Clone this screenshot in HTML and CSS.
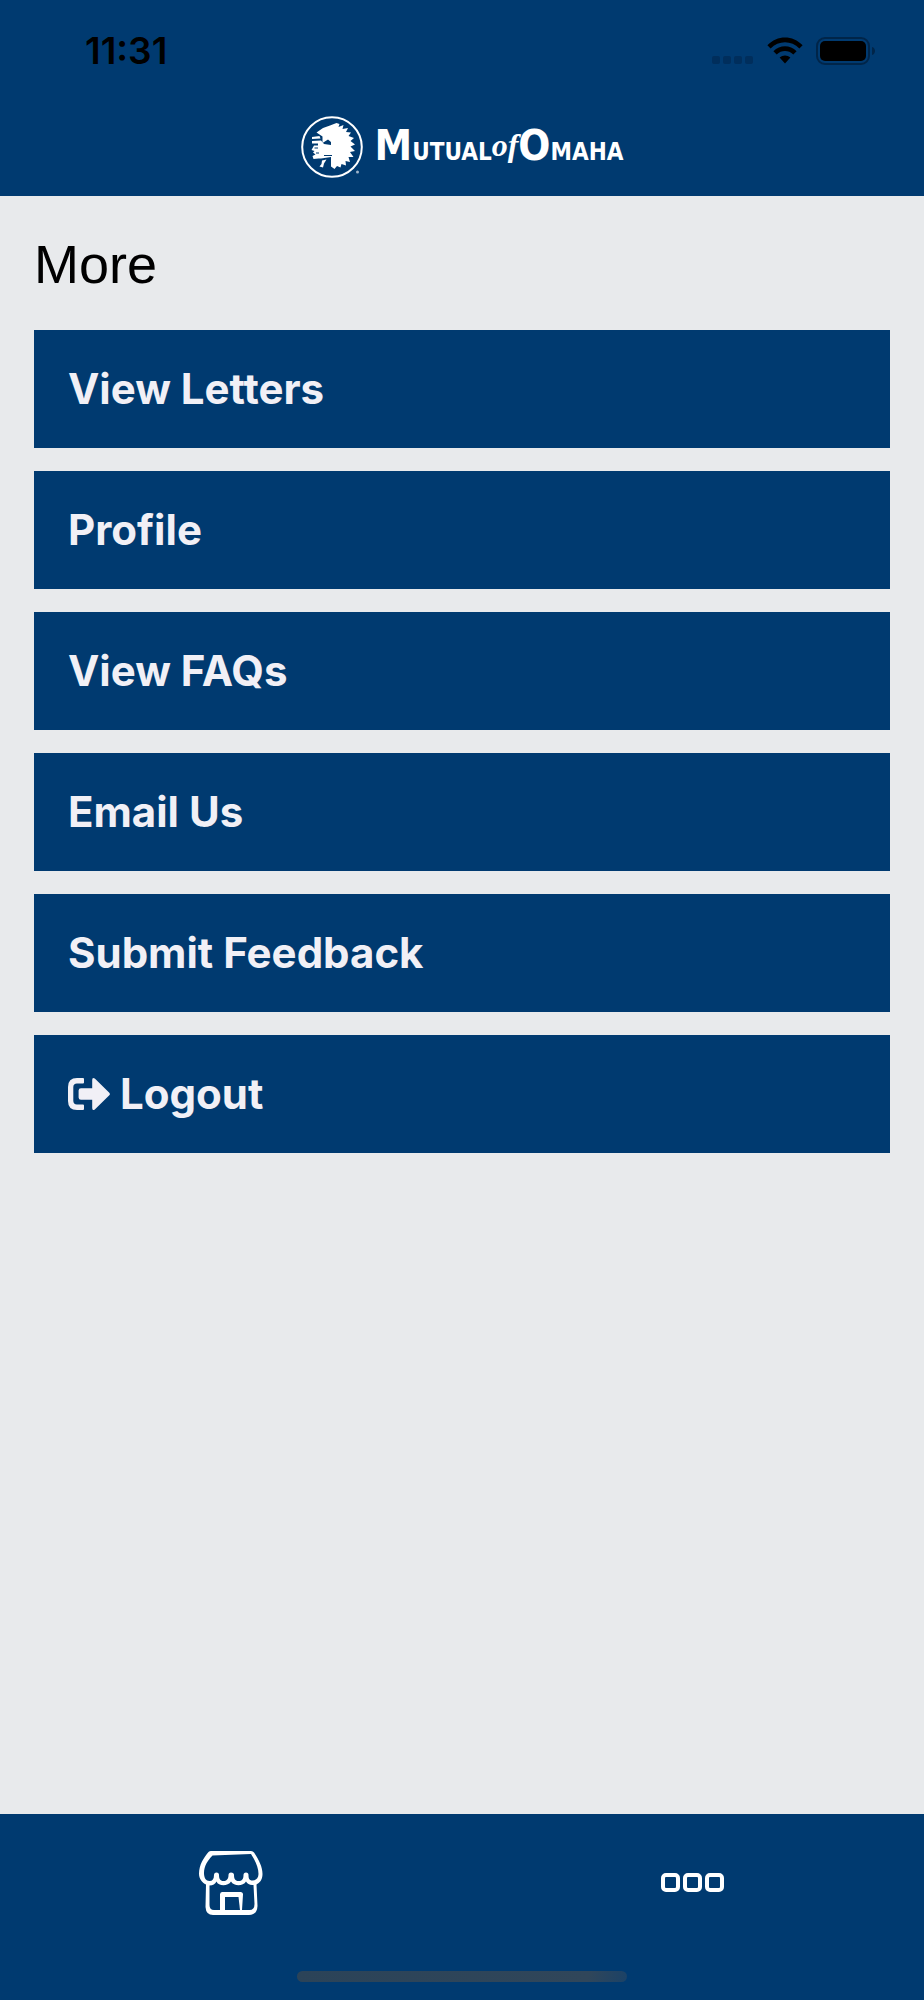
FILE: index.html
```html
<!DOCTYPE html>
<html lang="en">
<head>
<meta charset="utf-8">
<meta name="viewport" content="width=device-width, initial-scale=1">
<title>More</title>
<link rel="stylesheet" href="styles.css">
</head>
<body>
<div class="app">
  <header class="header">
    <div class="status">
      <time class="clock">11:31</time>
      <div class="indicators">
        <svg class="signal" width="42" height="8" viewBox="0 0 42 8" aria-hidden="true">
          <rect x="0" width="8" height="8" rx="2"/><rect x="11" width="8" height="8" rx="2"/><rect x="22" width="8" height="8" rx="2"/><rect x="33" width="8" height="8" rx="2"/>
        </svg>
        <svg class="wifi" width="36" height="28" viewBox="0 0 36 28" aria-hidden="true">
          <path d="M.4 8.2C10.2-2.2 25.800-2.200 35.600 8.200L32.400 11.500C24.500 3.300 11.500 3.300 3.600 11.500Z"/>
          <path d="M6.400 14.300C13 7.600 23 7.600 29.600 14.300L26.300 17.500C21.500 12.900 14.500 12.900 9.700 17.500Z"/>
          <path d="M12.600 20.400C15.800 17.700 20.200 17.700 23.400 20.400L18 26.500Z"/>
        </svg>
        <svg class="battery" width="60" height="28" viewBox="0 0 60 28" aria-hidden="true">
          <rect class="battery-shell" x="1" y="1" width="52" height="26" rx="8"/>
          <rect x="4" y="4" width="46" height="20" rx="5"/>
          <path class="battery-tip" d="M56 10C60 11 60 17 56 18Z"/>
        </svg>
      </div>
    </div>
    <div class="brand">
      <svg class="emblem" width="62" height="62" viewBox="0 0 62 62" aria-hidden="true">
        <circle class="ring" cx="31" cy="31" r="29.800"/>
        <path d="M15.500 16.500L22 12L29 9.500L35.500 7L38.500 8L37.500 11L42.500 9L41.500 13L47 12L45 16L50 16.500L47.500 20L53 22L49.500 25L54 28.500L49.500 30.500L54 35L49 36L52.500 41L47.500 41L49 46L44.500 45L45 49.500L40.500 48L39.500 51.500L36 50L33.500 53L30 50.500V26L27 23.500L21.500 27V20.500Z"/>
        <path d="M11 21L18.500 20L19.500 22.500L11 23Z"/>
        <path d="M11 25L20 24.500L23 28L30 29V41L20 42.500L17.500 42.500L12.500 43L11.500 40L14.500 38.500L12 36.500L13.500 35L10.500 34L13 29.500H17V27.500L11 27.500Z"/>
        <path d="M21 44.500L25.500 43.500L23 47.500L22 51.500L18.500 50.500L20.500 48Z"/>
        <path class="cut" d="M13.500 32H17M15 37H18M23 39.500H31"/>
        <circle class="registered" cx="56.500" cy="56" r="1.500"/>
      </svg>
      <div class="wordmark"><span class="initial">M</span>utual<span class="of">of</span><span class="initial">O</span>maha</div>
    </div>
  </header>

  <main class="content">
    <h1 class="title">More</h1>
    <div class="menu">
      <button class="item" type="button">View Letters</button>
      <button class="item" type="button">Profile</button>
      <button class="item" type="button">View FAQs</button>
      <button class="item" type="button">Email Us</button>
      <button class="item" type="button">Submit Feedback</button>
      <button class="item" type="button">
        <svg class="logout" width="42" height="32" viewBox="0 0 42 32" aria-hidden="true">
          <path d="M15 0Q16 0 16 1V4.500Q16 5.500 15 5.500H9Q5.300 5.500 5.300 9.200V22.800Q5.300 26.500 9 26.500H15Q16 26.500 16 27.500V31Q16 32 15 32H9Q0 32 0 23V9Q0 0 9 0Z"/>
          <path d="M26.800.600L41.300 14.700Q42.500 16 41.300 17.300L26.800 31.400Q24.200 33 24.200 30V21.800H13Q10.600 21.800 10.600 19.400V12.600Q10.600 10.200 13 10.200H24.200V2Q24.200-1 26.800.600Z"/>
        </svg>
        Logout
      </button>
    </div>
  </main>

  <footer class="footer">
    <nav class="tabs">
      <button class="tab" type="button" aria-label="Store">
        <svg width="64" height="64" viewBox="0 0 64 64" aria-hidden="true">
          <path class="shape" d="M12 0H52Q54 0 55 1.500C60 9 63.500 16 63.500 23C63.500 29 60.500 32 57.500 33.500L58.500 55Q58 64 50 64H14Q7 64 6.500 56L7 33.500C3 31.500 0 28 0 22.500C0 14 4.500 7 9.500 1Q10.500 0 12 0Z"/>
          <path class="hole" d="M13.500 4.500L52 3C56 9 59.500 16 59.500 23C59.500 27 57 29.500 53.500 29.500C50 29.500 49.500 27 49.500 24Q49.500 21.500 47 21.500Q44.500 21.500 44.500 24C44.500 28 43 30 39.500 30C36 30 35 27.500 35 24Q35 21.500 32 21.500Q29.500 21.500 29.500 24C29.500 28 27.500 30 24.500 30C21 30 20 27.500 20 24Q20 21.500 17.500 21.500Q15 21.500 15 24C15 28 13.500 30 10.500 30C7 30 5 27 5 22C5 15 9 9 13.500 4.500Z"/>
          <path class="hole" d="M10.500 34.500C14 34.500 16 33 17.500 30.500C19.500 35.500 29 35.500 32 30.500C35 35.500 44 35.500 47 30.500C48.500 33 51 34.500 54.500 34L55.500 53Q55.500 59 50.500 59H43L44 43.500Q44 41 41.500 41H23Q21 41 21 43.500V59H15Q10.500 59 10.500 54Z"/>
          <path class="hole" d="M26 46H39.500L41 59H26Z"/>
        </svg>
      </button>
      <button class="tab" type="button" aria-label="More">
        <svg width="64" height="20" viewBox="0 0 64 20" aria-hidden="true">
          <g class="squares"><rect x="2" y="2" width="15" height="15" rx="3"/><rect x="24" y="2" width="15" height="15" rx="3"/><rect x="46" y="2" width="15" height="15" rx="3"/></g>
        </svg>
      </button>
    </nav>
    <div class="home-bar"></div>
  </footer>
</div>
</body>
</html>
```
FILE: styles.css
```css
* { box-sizing: border-box; }

body {
  margin: 0;
  background: #e8eaec;
  font-family: Inter, "Liberation Sans", sans-serif;
}

.app {
  display: flex;
  flex-direction: column;
  min-height: 100vh;
}

.header {
  background: #003a70;
  padding-bottom: 18px;
}

.status {
  display: flex;
  align-items: center;
  justify-content: space-between;
  height: 102px;
  padding: 0 48px 0 85px;
}

.clock {
  font-size: 37px;
  font-weight: 600;
  line-height: 40px;
}

.indicators {
  display: flex;
  align-items: center;
  gap: 13px;
}

.signal {
  margin-top: 18px;
  fill: #002e5c;
}

.battery-shell {
  fill: none;
  stroke: #002549;
  stroke-width: 2;
}

.battery-tip { fill: #002549; }

.brand {
  display: flex;
  align-items: center;
  justify-content: center;
  gap: 12px;
  margin-top: 14px;
}

.emblem { fill: #fff; }

.ring {
  fill: none;
  stroke: #fff;
  stroke-width: 2;
}

.cut {
  fill: none;
  stroke: #003a70;
  stroke-width: 1;
}

.registered { fill: #9fb4ca; }

.wordmark {
  color: #fff;
  font-family: "DejaVu Sans Condensed", "Liberation Sans", sans-serif;
  font-size: 34px;
  font-weight: 700;
  font-variant: small-caps;
  line-height: 54px;
}

.initial { font-size: 42px; }

.of {
  font-family: "Liberation Serif", serif;
  font-size: 32px;
  font-style: italic;
  font-variant: normal;
  vertical-align: 4px;
  line-height: 32px;
}

.content {
  flex: 1;
  padding: 34px;
}

.title {
  margin: 0 0 32px;
  font-family: "Liberation Sans", sans-serif;
  font-size: 54px;
  font-weight: 400;
  line-height: 68px;
}

.menu {
  display: flex;
  flex-direction: column;
  gap: 23px;
}

.item {
  display: flex;
  align-items: center;
  gap: 10px;
  padding: 34px;
  border: 0;
  background: #003a70;
  color: #f1f0f6;
  font-family: inherit;
  font-size: 42px;
  font-weight: 700;
  line-height: 50px;
  text-align: left;
}

.logout { fill: #f1f0f6; }

.footer { background: #003a70; }

.tabs {
  display: grid;
  grid-template-columns: 1fr 1fr;
}

.tab {
  display: flex;
  align-items: center;
  justify-content: center;
  height: 138px;
  padding: 0;
  border: 0;
  background: transparent;
}

.shape { fill: #fff; }

.hole { fill: #003a70; }

.squares {
  fill: none;
  stroke: #fff;
  stroke-width: 4;
}

.home-bar {
  width: 36%;
  max-width: 330px;
  height: 11px;
  margin: 19px auto 18px;
  border-radius: 6px;
  background: linear-gradient(100deg, #2b4358 0%, #30465a 88%, #1b4267 100%);
}
```
